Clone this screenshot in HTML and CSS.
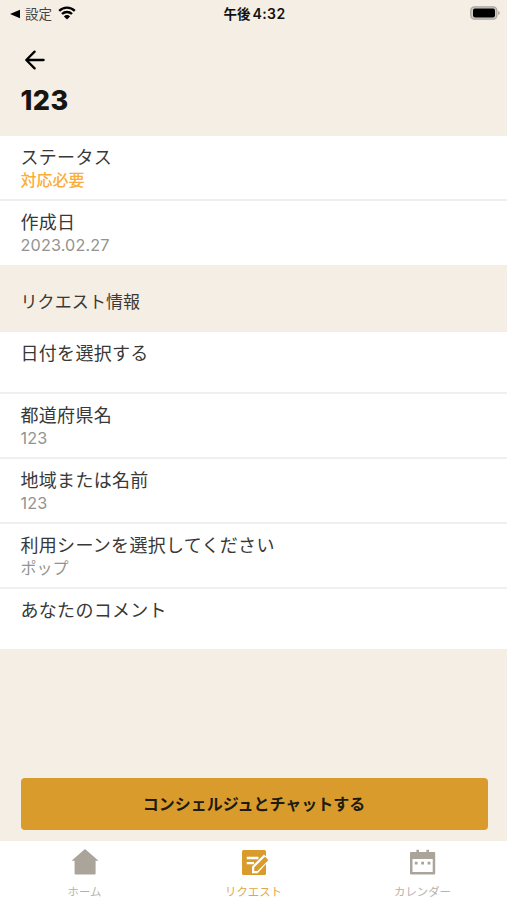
FILE: index.html
```html
<!DOCTYPE html>
<html lang="ja">
<head>
<meta charset="utf-8">
<title>123</title>
<link rel="stylesheet" href="styles.css">
</head>
<body>
<div class="screen">
  <div class="status">
    <div class="status-left">
      <svg class="back-app" viewBox="0 0 10 10"><path d="M0 5 10 .7v8.6z"/></svg>
      <span>設定</span>
      <svg class="wifi" viewBox="0 0 18 14"><path d="M1.2 4.8a11.2 11.2 0 0 1 15.6 0M4 8a7.2 7.2 0 0 1 10 0" fill="none" stroke="#000" stroke-width="2.4"/><path d="M9 13.5 5.9 10.4a4.4 4.4 0 0 1 6.2 0z"/></svg>
    </div>
    <div class="time">午後<span class="clock">4:32</span></div>
    <svg class="battery" viewBox="0 0 30 14"><rect x=".8" y=".8" width="26" height="12.4" rx="3.6" fill="#d1cbc1" stroke="#aaa59d" stroke-width="1.3"/><rect x="3" y="2.6" width="22" height="8.8" rx="1.8"/><path d="M28.2 4.8c2 .9 2 3.5 0 4.4z" fill="#aaa59d"/></svg>
  </div>
  <header class="header">
    <svg class="arrow" viewBox="0 0 20 20"><path d="M18.6 10H1.8M9.6 1.6 1.3 10l8.3 8.4" fill="none" stroke="#000" stroke-width="2.3" stroke-linecap="round" stroke-linejoin="round"/></svg>
    <h1>123</h1>
  </header>
  <section class="list">
    <div class="row"><div class="label">ステータス</div><div class="value pending">対応必要</div></div>
    <div class="row"><div class="label">作成日</div><div class="value number">2023.02.27</div></div>
  </section>
  <h2>リクエスト情報</h2>
  <section class="list">
    <div class="row empty"><div class="label">日付を選択する</div></div>
    <div class="row"><div class="label">都道府県名</div><div class="value number">123</div></div>
    <div class="row"><div class="label">地域または名前</div><div class="value number">123</div></div>
    <div class="row"><div class="label">利用シーンを選択してください</div><div class="value">ポップ</div></div>
    <div class="row empty"><div class="label">あなたのコメント</div></div>
  </section>
  <div class="action"><button>コンシェルジュとチャットする</button></div>
  <nav class="tabs">
    <div class="tab">
      <svg viewBox="0 0 28 28"><path d="M14 1 27.5 12.8H24.6V25.4a1 1 0 0 1-1 1H4.6a1 1 0 0 1-1-1V12.8H.5z"/></svg>
      <span>ホーム</span>
    </div>
    <div class="tab active">
      <svg viewBox="0 0 28 28"><rect x="2" y="2" width="24" height="25" rx="1.5"/><path d="M6.8 10H18.4M6.8 15.2H14" stroke="#fff" stroke-width="2.3" fill="none"/><path d="M12 25.2v-6.6L24 6.5 29.5 12 17.6 25.2z" fill="#fff"/><path d="M14.2 23v-3.4L24.3 9.3a1 1 0 0 1 1.4 0l2.1 2.1a1 1 0 0 1 0 1.4L17.6 23z"/></svg>
      <span>リクエスト</span>
    </div>
    <div class="tab">
      <svg viewBox="0 0 28 28"><path fill-rule="evenodd" d="M2 4H7.4V1.7h2.6V4h7.4V1.7H20V4h5.2a1 1 0 0 1 1 1v20.4a1 1 0 0 1-1 1H2a1 1 0 0 1-1-1V5a1 1 0 0 1 1-1zM3.5 11v13h20.2V11z"/><path d="M5.8 13.8h2.8v2.7H5.8zM12.2 13.8H15v2.7h-2.8zM18.6 13.8h2.8v2.7h-2.8z"/></svg>
      <span>カレンダー</span>
    </div>
  </nav>
</div>
</body>
</html>
```
FILE: styles.css
```css
* { box-sizing: border-box; }
body { margin: 0; background: #f5eee4; font-family: Inter, "Noto Sans CJK JP", sans-serif; color: #383836; }
.screen { width: 507px; height: 900px; display: flex; flex-direction: column; overflow: hidden; }
.status { height: 28px; padding: 0 7px 0 10px; display: grid; grid-template-columns: 1fr auto 1fr; align-items: center; flex: none; }
.status-left { display: flex; align-items: center; font-size: 13.5px; line-height: 20px; color: #444; }
.back-app { width: 10px; height: 10px; margin-right: 5px; }
.wifi { width: 18px; height: 14px; margin-left: 6px; margin-top: -2px; }
.time { font-size: 13.5px; line-height: 20px; font-weight: 700; color: #111; margin-right: 1px; }
.clock { font-weight: 600; font-size: 14px; margin-left: 2px; letter-spacing: .4px; }
.battery { width: 30px; height: 14px; justify-self: end; margin-top: -2px; }
.header { height: 108px; padding: 22px 20.5px 0; flex: none; }
.arrow { display: block; width: 20px; height: 20px; margin-left: 4.5px; }
h1 { margin: 14px 0 0; font-size: 27px; line-height: 34px; font-weight: 800; letter-spacing: .4px; color: #17150f; }
.list { background: #fff; flex: none; }
.row { height: 65px; padding: 9px 20.5px 0; border-bottom: 2px solid #efefee; }
.row.empty { height: 62px; }
.row:last-child { border-bottom: 1px solid #f0efec; }
.row.empty:last-child { height: 61px; }
.label { font-size: 18px; line-height: 26.5px; letter-spacing: .3px; }
.value { font-size: 16px; line-height: 17px; color: #93938f; }
.number { font-size: 16.2px; line-height: 17px; letter-spacing: .15px; }
.pending { color: #fbad3c; font-weight: 500; }
h2 { margin: 0; height: 66px; padding: 0 20.5px; line-height: 72px; font-size: 17px; font-weight: 400; letter-spacing: .1px; color: #3c3933; flex: none; }
.action { margin-top: auto; padding: 0 19.5px 11px 20.5px; }
button { display: block; width: 100%; height: 52px; padding: 0; border: 0; border-radius: 4px; background: #da9b2d; color: #201b10; font: 700 16px/52px Inter, "Noto Sans CJK JP", sans-serif; }
.tabs { height: 59px; flex: none; background: #fff; display: grid; grid-template-columns: repeat(3, 1fr); }
.tab { display: flex; flex-direction: column; align-items: center; padding-top: 7px; font-size: 11.4px; line-height: 16px; color: #b5b2ab; }
.tab svg { width: 28px; height: 28px; fill: #aba49a; margin-bottom: 8px; overflow: visible; }
.tab.active { color: #dfa74a; }
.tab.active svg { fill: #da9b2d; }
```
